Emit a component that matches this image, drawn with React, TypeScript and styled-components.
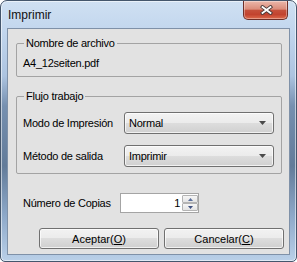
import React from "react";
import styled, { createGlobalStyle } from "styled-components";

const Global = createGlobalStyle`
  html, body { margin: 0; padding: 0; background: #ffffff; }
  body { font-family: "Liberation Sans", Arial, sans-serif; color: #000; }
  * { box-sizing: border-box; }
`;

const Window = styled.div`
  position: relative;
  width: 297px;
  height: 262px;
  border: 1px solid #44566c;
  border-radius: 7px 7px 5px 5px;
  background: linear-gradient(
    180deg,
    #cfe0f2 0px,
    #c3d7ee 28px,
    #adc4e0 75px,
    #7690b0 105px,
    #627b99 165px,
    #8ea9c9 215px,
    #bcd2ea 262px
  );
  box-shadow: inset 0 0 0 1px rgba(255, 255, 255, 0.55);
  display: flex;
  flex-direction: column;
  padding: 0 6px 6px 6px;
`;

const TitleBar = styled.div`
  height: 27px;
  display: flex;
  align-items: center;
  padding-left: 1px;
  font-size: 12px;
  color: #101010;
`;

const CloseButton = styled.div`
  position: absolute;
  top: 0;
  right: 8px;
  width: 45px;
  height: 19px;
  border: 1px solid #6e2f28;
  border-top: none;
  border-radius: 0 0 5px 5px;
  background: linear-gradient(
    180deg,
    #ebb7aa 0%,
    #db8d7b 45%,
    #c5503b 52%,
    #c2432f 75%,
    #dd6a4c 100%
  );
  box-shadow: inset 0 0 0 1px rgba(255, 255, 255, 0.35);
  display: flex;
  align-items: center;
  justify-content: center;
  padding-left: 2px;
`;

const Client = styled.div`
  flex: 1;
  border: 1px solid #7f91a8;
  background: #e2e2e2;
  display: flex;
  flex-direction: column;
  font-size: 11px;
  letter-spacing: -0.25px;
`;

const Group = styled.fieldset<{ $top: number; $pt: number }>`
  margin: ${(p) => p.$top}px 7px 0 8px;
  border: 1px solid #a3a3a3;
  border-radius: 2px;
  padding: ${(p) => p.$pt}px 7px 6px 6px;
  min-width: 0;
`;

const Legend = styled.legend`
  padding: 0 2px;
  margin-left: 1px;
  line-height: 14px;
  font-size: 11px;
`;

const Text = styled.div`
  line-height: 14px;
`;

const FormGrid = styled.div`
  display: grid;
  grid-template-columns: 101px 150px;
  row-gap: 11px;
  align-items: center;
`;

const Combo = styled.div`
  height: 22px;
  border: 1px solid #707070;
  border-radius: 3px;
  background: linear-gradient(180deg, #f3f3f3 0%, #ebebeb 50%, #dddddd 50%, #d0d0d0 100%);
  box-shadow: inset 0 0 0 1px rgba(255, 255, 255, 0.7);
  display: flex;
  align-items: center;
  padding: 0 7px 0 4px;
`;

const ComboValue = styled.span`
  flex: 1;
`;

const CopiesRow = styled.div`
  margin-top: 19px;
  padding-left: 15px;
  display: grid;
  grid-template-columns: 97px 79px;
  align-items: center;
`;

const SpinBox = styled.div`
  height: 20px;
  border: 1px solid #a4a4a4;
  background: #ffffff;
  display: flex;
  align-items: center;
  justify-content: flex-end;
`;

const SpinValue = styled.span`
  padding-right: 2px;
`;

const SpinColumn = styled.div`
  width: 16px;
  display: flex;
  flex-direction: column;
`;

const SpinButton = styled.div`
  height: 8px;
  border: 1px solid #b4b4b4;
  border-radius: 1px;
  background: linear-gradient(180deg, #f6f6f6 0%, #e4e4e4 100%);
  display: flex;
  align-items: center;
  justify-content: center;
`;

const ButtonRow = styled.div`
  margin-top: 15px;
  display: flex;
  justify-content: flex-end;
  gap: 5px;
  padding-right: 5px;
`;

const Button = styled.div`
  width: 120px;
  height: 21px;
  border: 1px solid #707070;
  border-radius: 3px;
  background: linear-gradient(180deg, #f2f2f2 0%, #ebebeb 50%, #dddddd 50%, #cfcfcf 100%);
  box-shadow: inset 0 0 0 1px rgba(255, 255, 255, 0.7);
  display: flex;
  align-items: center;
  justify-content: center;
  letter-spacing: 0;
`;

const Arrow = () => (
  <svg width="7" height="4" viewBox="0 0 7 4">
    <path d="M0 0 H7 L3.5 4 Z" fill="#4a4a4a" />
  </svg>
);

const SpinArrow = ({ up }: { up?: boolean }) => (
  <svg width="5" height="3" viewBox="0 0 5 3">
    <path d={up ? "M0 3 H5 L2.5 0 Z" : "M0 0 H5 L2.5 3 Z"} fill={up ? "#5a6f9c" : "#3f5180"} />
  </svg>
);

const CloseX = () => (
  <svg width="13" height="10" viewBox="0 0 13 10">
    <path d="M2.5 2 L10.5 8 M10.5 2 L2.5 8" stroke="#4a3a38" strokeWidth="3.6" strokeLinecap="square" />
    <path d="M2.5 2 L10.5 8 M10.5 2 L2.5 8" stroke="#ffffff" strokeWidth="1.8" strokeLinecap="square" />
  </svg>
);

export default function App() {
  return (
    <>
      <Global />
      <Window>
        <TitleBar>Imprimir</TitleBar>
        <CloseButton>
          <CloseX />
        </CloseButton>
        <Client>
          <Group $top={7} $pt={6}>
            <Legend>Nombre de archivo</Legend>
            <Text>A4_12seiten.pdf</Text>
          </Group>
          <Group $top={12} $pt={9}>
            <Legend>Flujo trabajo</Legend>
            <FormGrid>
              <Text>Modo de Impresión</Text>
              <Combo>
                <ComboValue>Normal</ComboValue>
                <Arrow />
              </Combo>
              <Text>Método de salida</Text>
              <Combo>
                <ComboValue>Imprimir</ComboValue>
                <Arrow />
              </Combo>
            </FormGrid>
          </Group>
          <CopiesRow>
            <Text>Número de Copias</Text>
            <SpinBox>
              <SpinValue>1</SpinValue>
              <SpinColumn>
                <SpinButton>
                  <SpinArrow up />
                </SpinButton>
                <SpinButton>
                  <SpinArrow />
                </SpinButton>
              </SpinColumn>
            </SpinBox>
          </CopiesRow>
          <ButtonRow>
            <Button>
              Aceptar(<u>O</u>)
            </Button>
            <Button>
              Cancelar(<u>C</u>)
            </Button>
          </ButtonRow>
        </Client>
      </Window>
    </>
  );
}
